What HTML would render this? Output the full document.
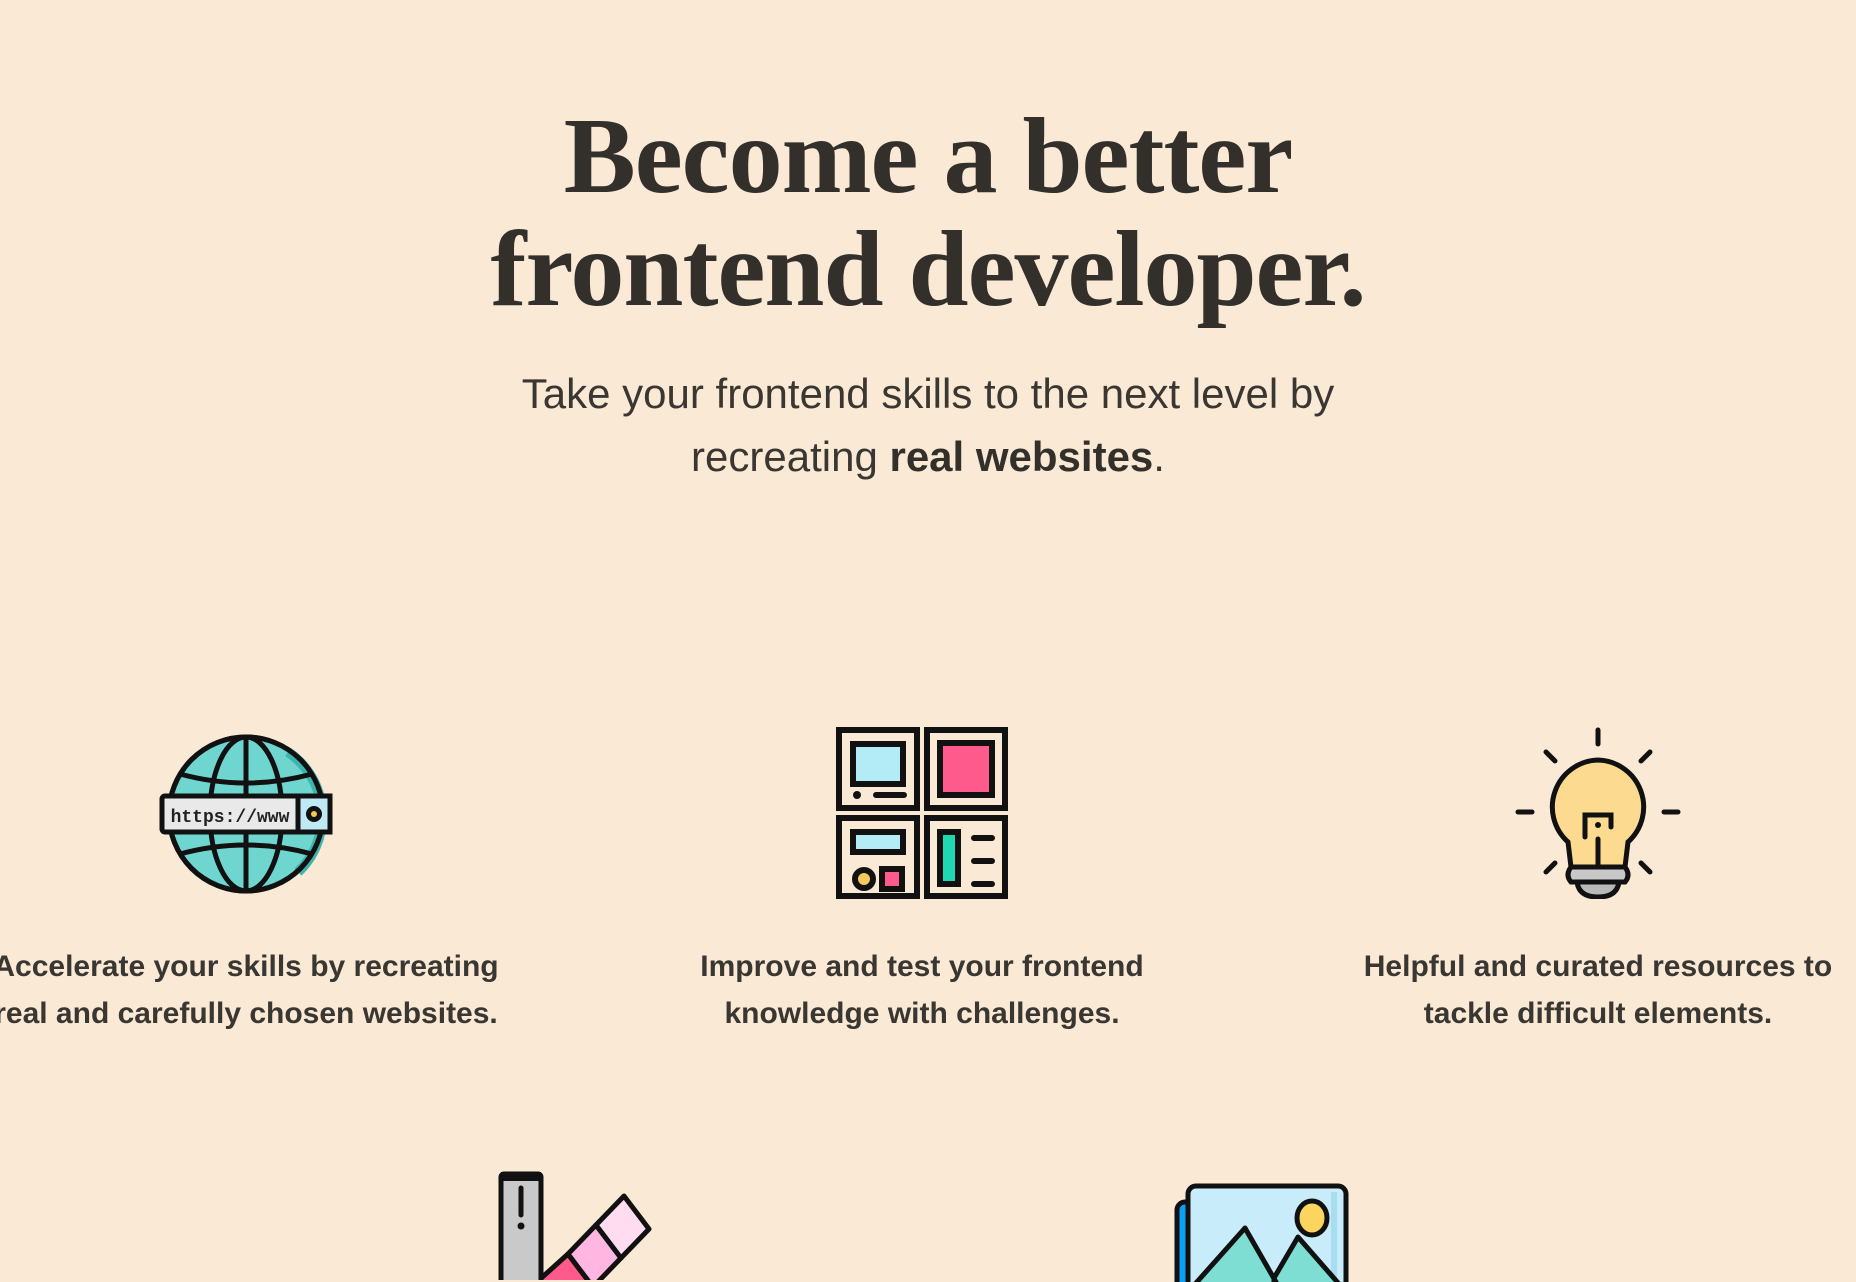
<!DOCTYPE html>
<html><head><meta charset="utf-8"><style>
html,body{margin:0;padding:0}
body{width:1856px;height:1280px;background:#f9e9d5;overflow:hidden;position:relative;color:#33302b;font-family:"Liberation Sans",sans-serif}
h1{position:absolute;left:0;width:1856px;top:100px;margin:0;text-align:center;font-family:"Liberation Serif",serif;font-weight:bold;font-size:108px;line-height:113px;letter-spacing:-1px;color:#33302b}
.sub{position:absolute;left:0;width:1856px;top:362px;text-align:center;font-size:42px;line-height:63px;color:#3a3631}
.sub b{color:#33302b}
.col{position:absolute;width:580px;text-align:center}
.col p{margin:0;font-weight:bold;font-size:30px;line-height:47px;color:#3a3631}
svg{position:absolute}
</style></head><body>
<h1>Become a better<br>frontend developer.</h1>
<div class="sub">Take your frontend skills to the next level by<br>recreating <b>real websites</b>.</div>

<svg style="left:158px;top:732px" width="176" height="164" viewBox="0 0 176 164">
<circle cx="88" cy="82" r="77" fill="#6ed6cf" stroke="#111" stroke-width="5"/>
<path d="M130 20 A77 77 0 0 1 140 140" fill="none" stroke="#3fb3ad" stroke-width="10"/>
<circle cx="88" cy="82" r="77" fill="none" stroke="#111" stroke-width="5"/>
<ellipse cx="88" cy="82" rx="36" ry="77" fill="none" stroke="#111" stroke-width="5"/>
<line x1="88" y1="5" x2="88" y2="159" stroke="#111" stroke-width="5"/>
<path d="M22 42 Q88 60 154 42 M12 82 H164 M22 122 Q88 104 154 122" fill="none" stroke="#111" stroke-width="5"/>
<rect x="4" y="64" width="150" height="36" rx="3" fill="#e9e9ea" stroke="#111" stroke-width="5"/>
<rect x="140" y="64" width="32" height="36" fill="#bfe9f5" stroke="#111" stroke-width="5"/>
<text x="72" y="90" text-anchor="middle" font-family="Liberation Mono,monospace" font-weight="bold" font-size="18" fill="#222">https://www</text>
<circle cx="156" cy="82" r="8" fill="#111"/><circle cx="156" cy="82" r="3" fill="#f3c94b"/>
</svg>

<svg style="left:836px;top:727px" width="172" height="172" viewBox="0 0 172 172">
<g fill="none" stroke="#111" stroke-width="6">
<rect x="3" y="3" width="78" height="78" fill="#f9e9d5"/><rect x="91" y="3" width="78" height="78"/>
<rect x="3" y="91" width="78" height="78"/><rect x="91" y="91" width="78" height="78"/>
<rect x="17" y="17" width="50" height="40" fill="#b3ecf7"/>
<rect x="104" y="16" width="52" height="52" fill="#ff5a8c"/>
<rect x="17" y="105" width="50" height="20" fill="#b3ecf7"/>
<circle cx="28" cy="152" r="9" fill="#f5c95a"/>
<rect x="46" y="142" width="20" height="20" fill="#ff5a8c"/>
<rect x="104" y="105" width="18" height="52" fill="#1fd8b1"/>
<path d="M138 111 H156 M138 134 H156 M138 157 H156 M40 68 H68" stroke-linecap="round"/>
</g><circle cx="21" cy="68" r="4" fill="#111"/>
</svg>

<svg style="left:1513px;top:727px" width="172" height="172" viewBox="0 0 172 172">
<g stroke="#111" stroke-width="5" stroke-linecap="round" fill="none">
<path d="M85 3 V17 M33 25 L42 34 M137 25 L128 34 M5 85 H19 M151 85 H165 M33 145 L42 136 M137 145 L128 136"/>
<path d="M85 33 A47 47 0 0 1 115 115 L112 140 H58 L55 115 A47 47 0 0 1 85 33Z" fill="#fcda90"/>
<path d="M72 110 V88 H98 V100 M85 112 V140"/>
<path d="M58 140 H112 Q118 148 112 155 H58 Q52 148 58 140Z" fill="#c8c8c8"/>
<path d="M64 155 H106 Q104 170 85 170 Q66 170 64 155Z" fill="#b9b9b9"/>
</g><circle cx="85" cy="98" r="3" fill="#111"/>
</svg>

<div class="col" style="left:-44px;top:943px"><p>Accelerate your skills by recreating<br>real and carefully chosen websites.</p></div>
<div class="col" style="left:632px;top:943px"><p>Improve and test your frontend<br>knowledge with challenges.</p></div>
<div class="col" style="left:1308px;top:943px"><p>Helpful and curated resources to<br>tackle difficult elements.</p></div>

<svg style="left:498px;top:1170px" width="160" height="110" viewBox="0 0 160 110">
<g stroke="#111" stroke-width="5" stroke-linejoin="round">
<path d="M70 84 L95 117 L60 150 L30 120Z" fill="#ff5a8c"/>
<path d="M98 55 L123 88 L95 117 L70 84Z" fill="#ffb6e0"/>
<path d="M126 26 L151 59 L123 88 L98 55Z" fill="#ffdcf0"/>
</g>
<rect x="3" y="4" width="40" height="130" rx="3" fill="#c9c9c9" stroke="#111" stroke-width="5"/>
<rect x="3" y="2" width="40" height="9" fill="#111"/>
<path d="M23 18 V45" stroke="#111" stroke-width="5" stroke-linecap="round"/><circle cx="23" cy="56" r="3.5" fill="#111"/>
</svg>

<svg style="left:1174px;top:1182px" width="176" height="100" viewBox="0 0 176 100">
<rect x="3" y="20" width="40" height="100" rx="8" fill="#0aa0f5" stroke="#111" stroke-width="5"/>
<rect x="14" y="4" width="158" height="120" rx="8" fill="#c9ecfb" stroke="#111" stroke-width="5"/>
<path d="M160 10 V110" stroke="#a8dcef" stroke-width="6"/>
<ellipse cx="138" cy="36" rx="15" ry="17" fill="#fcd55e" stroke="#111" stroke-width="5"/>
<path d="M14 110 L71 46 L110 114 Z M100 96 L124 55 L172 110 V120 H100Z" fill="#7fded3" stroke="#111" stroke-width="5" stroke-linejoin="round"/>
</svg>
</body></html>
